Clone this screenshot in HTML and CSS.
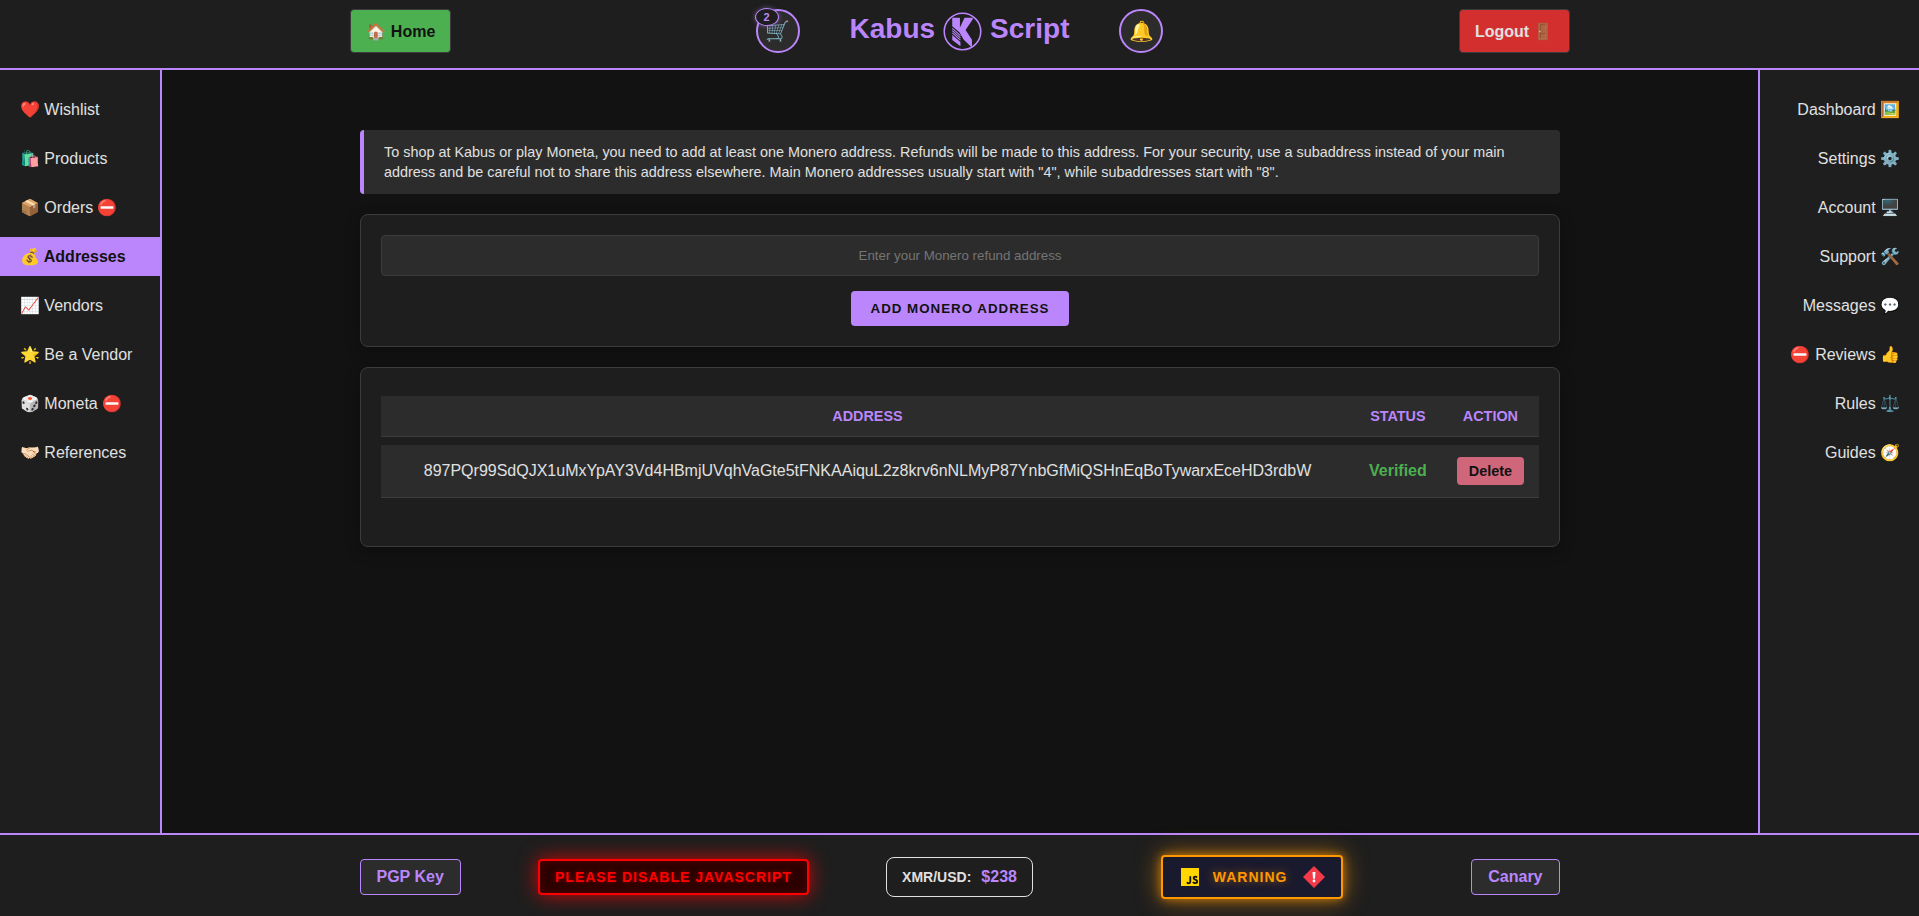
FILE: index.html
```html
<!DOCTYPE html>
<html lang="en">
<head>
<meta charset="utf-8">
<title>Kabus Script - Addresses</title>
<link rel="stylesheet" href="styles.css">
</head>
<body>
<header class="topbar">
  <div class="topbar-inner">
    <div class="topbar-side"><a class="btn-home" href="#">🏠 Home</a></div>
    <div class="brand-group">
      <a class="round-icon" href="#" aria-label="Cart">🛒<span class="cart-count">2</span></a>
      <a class="brand" href="#">
        <span>Kabus</span>
        <svg class="brand-logo" viewBox="0 0 38 38" aria-hidden="true">
          <circle cx="19" cy="19" r="17.8" fill="none" stroke="#bb86fc" stroke-width="1.5"/>
          <path fill="#bb86fc" d="M9 5.500h7.500v9.500l4.500-9.500h8v1.500l-7 10.500 6.200 9.500v7.500l-8-7.500-4-7-7.200-6z"/>
          <path fill="none" stroke="#bb86fc" stroke-width="1" d="M9 16l8 7M9 18.200l8 7M9 20.400l8 7"/>
          <path fill="#bb86fc" d="M9 22.300l8 7v4l-8-6z"/>
        </svg>
        <span>Script</span>
      </a>
      <a class="round-icon" href="#" aria-label="Notifications">🔔</a>
    </div>
    <div class="topbar-side topbar-side-end"><button class="btn-logout" type="button">Logout 🚪</button></div>
  </div>
</header>
<div class="layout">
  <nav class="sidebar" aria-label="Shop">
    <a href="#">❤️ Wishlist</a>
    <a href="#">🛍️ Products</a>
    <a href="#">📦 Orders ⛔</a>
    <a class="active" href="#">💰 Addresses</a>
    <a href="#">📈 Vendors</a>
    <a href="#">🌟 Be a Vendor</a>
    <a href="#">🎲 Moneta ⛔</a>
    <a href="#">🤝🏻 References</a>
  </nav>
  <main class="content">
    <p class="notice">To shop at Kabus or play Moneta, you need to add at least one Monero address. Refunds will be made to this address. For your security, use a subaddress instead of your main address and be careful not to share this address elsewhere. Main Monero addresses usually start with "4", while subaddresses start with "8".</p>
    <form class="card address-form">
      <input class="address-input" type="text" aria-label="Monero refund address" placeholder="Enter your Monero refund address">
      <button class="btn-add" type="button">Add Monero Address</button>
    </form>
    <section class="card address-list">
      <table class="address-table">
        <thead><tr><th class="col-address">Address</th><th>Status</th><th>Action</th></tr></thead>
        <tbody><tr>
          <td>897PQr99SdQJX1uMxYpAY3Vd4HBmjUVqhVaGte5tFNKAAiquL2z8krv6nNLMyP87YnbGfMiQSHnEqBoTywarxEceHD3rdbW</td>
          <td class="verified">Verified</td>
          <td><button class="btn-delete" type="button">Delete</button></td>
        </tr></tbody>
      </table>
    </section>
  </main>
  <nav class="sidebar sidebar-right" aria-label="Account">
    <a href="#">Dashboard 🖼️</a>
    <a href="#">Settings ⚙️</a>
    <a href="#">Account 🖥️</a>
    <a href="#">Support 🛠️</a>
    <a href="#">Messages 💬</a>
    <a href="#">⛔ Reviews 👍</a>
    <a href="#">Rules ⚖️</a>
    <a href="#">Guides 🧭</a>
  </nav>
</div>
<footer class="footer">
  <div class="footer-inner">
    <div class="footer-side">
      <a class="footer-btn" href="#">PGP Key</a>
      <div class="footer-slot"><span class="js-alert">Please disable JavaScript</span></div>
    </div>
    <div class="rate"><span class="rate-label">XMR/USD:</span><span class="rate-value">$238</span></div>
    <div class="footer-side">
      <div class="footer-slot">
        <div class="warning">
          <svg class="warning-icon" viewBox="0 0 22 22" aria-hidden="true">
            <rect x="2" y="2" width="18" height="18" fill="#ffd600"/>
            <path fill="none" stroke="#111" stroke-width="1.8" d="M11.300 10.200v5.600q0 1.500-1.500 1.500-1.200 0-1.800-1.100M18 11.600q-.6-.9-1.800-.9-1.600 0-1.600 1.300 0 1 1.700 1.600 1.900.6 1.900 2 0 1.600-2 1.600-1.500 0-2.200-1.100"/>
          </svg>
          <span class="warning-text">Warning</span>
          <svg class="warning-icon" viewBox="0 0 22 22" aria-hidden="true">
            <path fill="#f23a48" d="M11 0l11 11-11 11L0 11z"/>
            <path fill="#fff" d="M9.500 6h3l-.5 6.700h-2z"/>
            <circle cx="11" cy="15" r="1.400" fill="#fff"/>
          </svg>
        </div>
      </div>
      <a class="footer-btn" href="#">Canary</a>
    </div>
  </div>
</footer>
</body>
</html>
```
FILE: styles.css
```css
* { box-sizing: border-box; }

body {
  margin: 0;
  min-height: 100vh;
  display: flex;
  flex-direction: column;
  background: #121212;
  color: #e0e0e0;
  font-family: "Liberation Sans", Arial, "Noto Color Emoji", sans-serif;
  font-size: 16px;
}

a { color: inherit; text-decoration: none; }
button, input { font-family: inherit; }

.topbar {
  background: #1e1e1e;
  border-bottom: 2px solid #bb86fc;
  padding: 9px 20px 15px;
}

.topbar-inner {
  display: flex;
  align-items: center;
  max-width: 1220px;
  margin: 0 auto;
}

.topbar-side { flex: 1; display: flex; }
.topbar-side-end { justify-content: flex-end; }

.btn-home, .btn-logout {
  padding: 12px 15px 10px;
  border: 1px solid #3c3c3c;
  border-radius: 4px;
  font-size: 16px;
  font-weight: bold;
  line-height: 20px;
}

.btn-home { padding-left: 16px; background: #4caf50; color: #121212; }
.btn-logout { background: #d32f2f; color: #e0e0e0; }

.brand-group { display: flex; align-items: center; gap: 50px; }

.round-icon {
  position: relative;
  display: flex;
  align-items: center;
  justify-content: center;
  width: 44px;
  height: 44px;
  border: 2px solid #bb86fc;
  border-radius: 50%;
  background: #2c2c2c;
  font-size: 20px;
}

.cart-count {
  position: absolute;
  top: -3px;
  left: -3px;
  width: 24px;
  height: 18px;
  border: 1px solid #bb86fc;
  border-radius: 50%;
  background: #1e1e1e;
  color: #bb86fc;
  font-size: 11px;
  font-weight: bold;
  line-height: 16px;
  text-align: center;
  box-shadow: 0 0 5px rgba(187, 134, 252, .5);
}

.brand {
  display: flex;
  align-items: center;
  gap: 8px;
  color: #bb86fc;
  font-size: 28px;
  font-weight: bold;
  line-height: 38px;
}

.brand span { padding-bottom: 5px; }
.brand-logo { width: 39px; height: 39px; }

.layout { flex: 1; display: flex; }

.sidebar {
  flex: 0 0 162px;
  display: flex;
  flex-direction: column;
  gap: 10px;
  padding: 20px 0;
  background: #1e1e1e;
  border-right: 2px solid #bb86fc;
}

.sidebar a { padding: 10px 20px; line-height: 19px; white-space: nowrap; }
.sidebar .active { background: #bb86fc; color: #121212; font-weight: bold; }

.sidebar-right {
  flex-basis: 161px;
  border-right: 0;
  border-left: 2px solid #bb86fc;
  text-align: right;
}

.sidebar-right a { padding: 10px 19px; }

.content {
  flex: 1;
  min-width: 0;
  max-width: 1240px;
  margin: 0 auto;
  padding: 60px 20px 20px;
  display: flex;
  flex-direction: column;
  gap: 20px;
}

.notice {
  margin: 0;
  padding: 12px 20px;
  background: #2c2c2c;
  border-left: 4px solid #bb86fc;
  border-radius: 4px;
  font-size: 0.9rem;
  line-height: 20px;
}

.card {
  background: #1e1e1e;
  border: 1px solid #3c3c3c;
  border-radius: 8px;
  padding: 20px;
  box-shadow: 0 4px 15px rgba(0, 0, 0, .3);
}

.address-form { display: flex; flex-direction: column; align-items: center; gap: 15px; }

.address-input {
  width: 100%;
  padding: 12px;
  background: #2c2c2c;
  border: 1px solid #3c3c3c;
  border-radius: 4px;
  color: #e0e0e0;
  line-height: 15px;
  text-align: center;
}

.address-input::placeholder { color: #757575; }

.btn-add {
  padding: 10px 20px;
  border: 0;
  border-radius: 4px;
  background: #bb86fc;
  color: #121212;
  font-weight: bold;
  line-height: 15px;
  letter-spacing: 1px;
  text-transform: uppercase;
}

.address-list { padding-bottom: 40px; }

.address-table { width: 100%; border-collapse: separate; border-spacing: 0 8px; }

.address-table th, .address-table td {
  padding: 12px 15px;
  background: #2c2c2c;
  border-bottom: 1px solid #3c3c3c;
  text-align: center;
}

.address-table th {
  color: #bb86fc;
  font-size: 0.9rem;
  line-height: 16px;
  text-transform: uppercase;
}

.address-table .col-address { width: 100%; }
.address-table .verified { color: #4caf50; font-weight: bold; }

.btn-delete {
  display: block;
  padding: 6px 12px;
  border: 0;
  border-radius: 4px;
  background: #cf6679;
  color: #121212;
  font-size: 0.9rem;
  font-weight: bold;
  line-height: 16px;
}

.footer {
  background: #1e1e1e;
  border-top: 2px solid #bb86fc;
  padding: 20px 20px 17px;
}

.footer-inner { display: flex; align-items: center; max-width: 1200px; margin: 0 auto; }
.footer-side { flex: 1; display: flex; align-items: center; }
.footer-slot { flex: 1; display: flex; justify-content: center; }

.footer-btn {
  padding: 8px 16px;
  background: #2c2c2c;
  border: 1px solid #bb86fc;
  border-radius: 4px;
  color: #bb86fc;
  font-weight: bold;
  line-height: 18px;
}

.js-alert {
  padding: 8px 15px;
  background: #2a0000;
  border: 2px solid #f00;
  border-radius: 4px;
  color: #f00;
  font-size: 14px;
  font-weight: bold;
  line-height: 16px;
  letter-spacing: 1px;
  text-transform: uppercase;
  text-shadow: 0 0 5px rgba(255, 0, 0, .5);
  box-shadow: 0 0 20px rgba(255, 0, 0, .8), inset 0 0 10px rgba(255, 0, 0, .2);
}

.rate {
  display: flex;
  align-items: center;
  gap: 10px;
  padding: 10px 15px;
  border: 1px solid #e0e0e0;
  border-radius: 8px;
  font-weight: bold;
  line-height: 18px;
}

.rate-label { font-size: 14px; }
.rate-value { color: #bb86fc; }

.warning {
  display: flex;
  align-items: center;
  gap: 12px;
  padding: 9px 16px;
  background: #1a1a2e;
  border: 2px solid #ff9800;
  border-radius: 4px;
  box-shadow: 0 0 10px rgba(255, 152, 0, .6), 0 0 24px rgba(255, 152, 0, .6);
}

.warning-text {
  padding-right: 4px;
  color: #ff9800;
  font-size: 14px;
  font-weight: bold;
  letter-spacing: 1px;
  text-transform: uppercase;
  text-shadow: 0 0 10px rgba(255, 152, 0, .5);
}

.warning-icon { width: 22px; height: 22px; }
```
